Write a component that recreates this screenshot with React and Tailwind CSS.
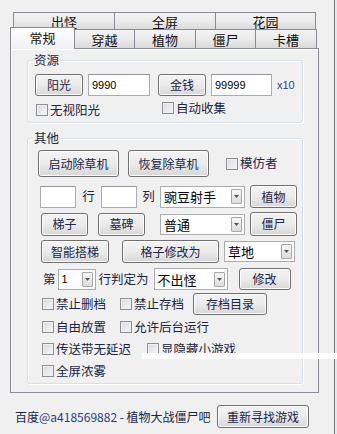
import React from 'react';

const Btn = ({ className = '', children }) => (
  <div
    className={`flex items-center justify-center shrink-0 whitespace-nowrap rounded-[3px] border border-[#707070] bg-linear-to-b from-[#f3f3f3] via-[#ebebeb] to-[#d7d7d7] shadow-[inset_0_0_0_1px_#fcfcfc] text-[12px] leading-none text-[#1a2547] ${className}`}
  >
    {children}
  </div>
);

const Check = ({ label, className = '' }) => (
  <div className={`flex items-center shrink-0 whitespace-nowrap ${className}`}>
    <span className="w-[12px] h-[12px] border border-[#8f8f8f] bg-linear-to-br from-[#d6d9de] to-[#f7f8fa] shadow-[inset_0_0_0_1px_#eef0f3]" />
    <span className="ml-[2px] text-[12.5px] leading-none text-[#1a2547]">{label}</span>
  </div>
);

const Input = ({ className = '', value }) => (
  <div
    className={`flex items-center shrink-0 bg-white border border-[#abadb3] border-t-[#8f939c] pl-[3px] text-[11px] leading-none text-black font-['Liberation_Sans',sans-serif] ${className}`}
  >
    {value}
  </div>
);

const Select = ({ className = '', value, small }) => (
  <div
    className={`flex items-center justify-between shrink-0 bg-white border border-[#abadb3] pl-[3px] pr-[2px] leading-none text-black ${small ? "text-[11px] font-['Liberation_Sans',sans-serif]" : 'text-[13px]'} ${className}`}
  >
    <span>{value}</span>
    <span className="w-[11px] h-[15px] flex items-center justify-center border border-[#a8a8a8] rounded-[1px] bg-linear-to-b from-[#f7f7f7] to-[#dcdcdc]">
      <svg width="5" height="3" viewBox="0 0 5 3">
        <path d="M0 0h5L2.5 3z" fill="#555" />
      </svg>
    </span>
  </div>
);

const Group = ({ title, className = '', children }) => (
  <div className={`relative ml-[16px] w-[276px] rounded-[3px] border border-[#d5dfe5] shadow-[inset_1px_1px_0_#fff,1px_1px_0_#fff] ${className}`}>
    <span className="absolute left-[5px] top-[-9px] px-[1px] bg-[#f0f0f0] text-[12.5px] leading-[16px] text-[#1a2547]">{title}</span>
    {children}
  </div>
);

const Tab = ({ className = '', children }) => (
  <div
    className={`flex items-center justify-center shrink-0 border border-[#898c95] bg-linear-to-b from-[#f3f3f3] via-[#ebebeb] to-[#d9d9d9] text-[13px] leading-none text-[#111] ${className}`}
  >
    {children}
  </div>
);

export default function App() {
  return (
    <div className="relative w-[337px] h-[434px] flex bg-[#f0f0f0] overflow-hidden font-['Noto_Sans_CJK_SC','Liberation_Sans',sans-serif]">
      <div className="w-[334px] flex flex-col pt-[12px]">
        {/* tab rows */}
        <div className="flex ml-[13px] h-[18px]">
          <Tab className="w-[102px] h-[18px] border-b-0">出怪</Tab>
          <Tab className="w-[102px] h-[18px] -ml-px border-b-0">全屏</Tab>
          <Tab className="w-[101px] h-[18px] -ml-px border-b-0">花园</Tab>
        </div>
        <div className="flex items-end ml-[10px] h-[19px] -mt-px">
          <div className="relative z-10 w-[65px] h-[22px] -mb-px flex items-center justify-center border border-b-0 border-[#898c95] bg-linear-to-b from-[#ffffff] to-[#f0f0f0] text-[13px] leading-none text-[#111] pb-[2px]">
            常规
          </div>
          <Tab className="w-[61px] h-[19px] -ml-px border-b-0">穿越</Tab>
          <Tab className="w-[62px] h-[19px] -ml-px border-b-0">植物</Tab>
          <Tab className="w-[61px] h-[19px] -ml-px border-b-0">僵尸</Tab>
          <Tab className="w-[62px] h-[19px] -ml-px border-b-0">卡槽</Tab>
        </div>

        {/* panel */}
        <div className="ml-[10px] w-[309px] h-[345px] border border-[#898c95] shadow-[inset_1px_1px_0_#fff] pt-[11px]">
          <Group title="资源" className="h-[63px]">
            <div className="flex items-center mt-[13px] ml-[7px] h-[22px]">
              <Btn className="w-[48px] h-[22px]">阳光</Btn>
              <Input className="ml-[5px] w-[62px] h-[22px]" value="9990" />
              <Btn className="ml-[8px] w-[48px] h-[22px]">金钱</Btn>
              <Input className="ml-[5px] w-[61px] h-[22px]" value="99999" />
              <span className="ml-[5px] text-[11px] leading-none text-[#27379a] font-['Liberation_Sans',sans-serif]">x10</span>
            </div>
            <div className="flex items-start mt-[5px] ml-[8px]">
              <Check className="w-[126px] mt-[3px]" label="无视阳光" />
              <Check className="mt-[1px]" label="自动收集" />
            </div>
          </Group>

          <Group title="其他" className="mt-[15px] h-[246px]">
            <div className="flex items-center mt-[11px] ml-[10px] h-[27px]">
              <Btn className="w-[81px] h-[27px]">启动除草机</Btn>
              <Btn className="ml-[9px] w-[81px] h-[27px]">恢复除草机</Btn>
              <Check className="ml-[17px]" label="模仿者" />
            </div>
            <div className="flex items-center mt-[8px] ml-[12px] h-[23px]">
              <Input className="w-[36px] h-[22px]" value="" />
              <span className="w-[25px] text-center text-[12.5px] leading-none text-[#1a2547]">行</span>
              <Input className="w-[36px] h-[22px]" value="" />
              <span className="w-[23px] text-center text-[12.5px] leading-none text-[#1a2547]">列</span>
              <Select className="w-[85px] h-[22px]" value="豌豆射手" />
              <Btn className="ml-[5px] w-[47px] h-[23px]">植物</Btn>
            </div>
            <div className="flex items-center mt-[4px] ml-[13px] h-[24px]">
              <Btn className="w-[47px] h-[23px]">梯子</Btn>
              <Btn className="ml-[10px] w-[47px] h-[23px]">墓碑</Btn>
              <Select className="ml-[15px] w-[85px] h-[21px]" value="普通" />
              <Btn className="ml-[5px] w-[47px] h-[24px]">僵尸</Btn>
            </div>
            <div className="flex items-center mt-[4px] ml-[13px] h-[23px]">
              <Btn className="w-[68px] h-[23px]">智能搭梯</Btn>
              <Btn className="ml-[13px] w-[97px] h-[23px]">格子修改为</Btn>
              <Select className="ml-[5px] w-[71px] h-[21px]" value="草地" />
            </div>
            <div className="flex items-center mt-[5px] ml-[15px] h-[22px]">
              <span className="text-[12.5px] leading-none text-[#1a2547]">第</span>
              <Select className="ml-[2px] w-[38px] h-[21px]" value="1" small />
              <span className="ml-[3px] text-[12.5px] leading-none text-[#1a2547]">行判定为</span>
              <Select className="ml-[5px] w-[74px] h-[22px]" value="不出怪" />
              <Btn className="ml-[11px] w-[52px] h-[22px]">修改</Btn>
            </div>
            <div className="flex items-center mt-[3px] ml-[14px] h-[22px]">
              <Check className="w-[78px]" label="禁止删档" />
              <Check className="w-[73px]" label="禁止存档" />
              <Btn className="w-[74px] h-[22px]">存档目录</Btn>
            </div>
            <div className="flex items-center mt-[1px] ml-[14px] h-[22px]">
              <Check className="w-[78px]" label="自由放置" />
              <Check label="允许后台运行" />
            </div>
            <div className="flex items-center ml-[14px] h-[22px]">
              <Check className="w-[105px]" label="传送带无延迟" />
              <Check label="显隐藏小游戏" />
            </div>
            <div className="flex items-center ml-[14px] h-[22px]">
              <Check label="全屏浓雾" />
            </div>
          </Group>
        </div>

        {/* footer */}
        <div className="flex items-center mt-[12px] pl-[15px] h-[23px]">
          <span className="shrink-0 whitespace-nowrap text-[12px] leading-none text-[#1a2547]">
            百度<span className="text-[#2a3a8c]">@a418569882</span> - 植物大战僵尸吧
          </span>
          <Btn className="ml-auto mr-[25px] w-[92px] h-[23px]">重新寻找游戏</Btn>
        </div>
      </div>
      <div className="w-px h-full bg-[#7b7d82]" />
      <div className="w-[2px] h-full bg-[#dde8f5]" />

      {/* redraw glitch strip */}
      <div className="absolute top-[353px] left-[142px] right-0 h-[6px] bg-white" />
    </div>
  );
}
